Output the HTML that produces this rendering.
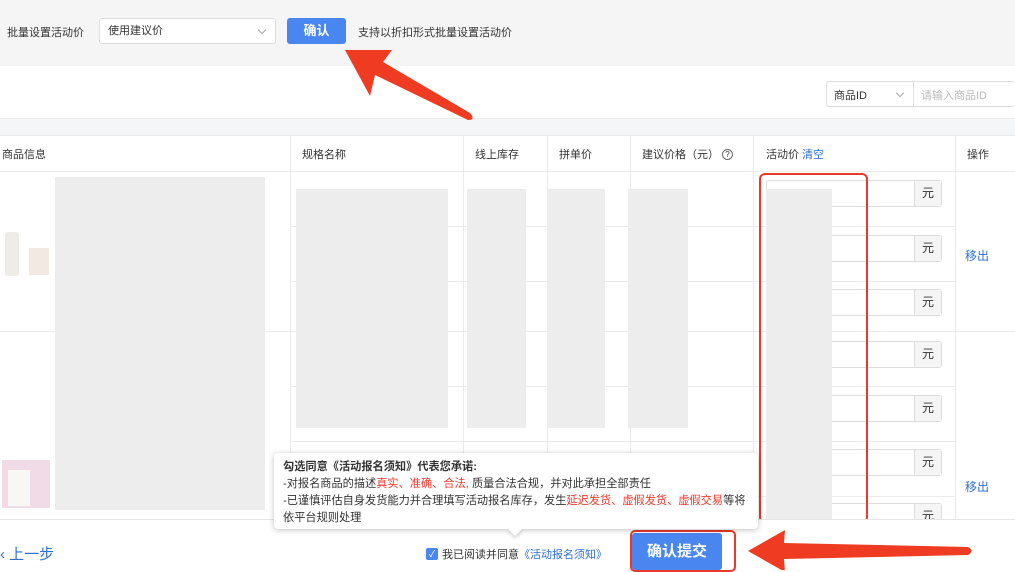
<!DOCTYPE html>
<html><head><meta charset="utf-8"><style>
*{margin:0;padding:0;box-sizing:border-box}
body{width:1015px;height:570px;overflow:hidden;position:relative;background:#fff;font-family:"Liberation Sans","Noto Sans CJK SC",sans-serif;font-size:11px;color:#333}
.a{position:absolute}
.g{position:absolute;background:#ededed}
.hl{position:absolute;height:1px;background:#ebebeb}
.vl{position:absolute;width:1px;background:#ebebeb}
.inp{position:absolute;left:766px;width:176px;height:27px;border:1px solid #ddd;border-radius:3px;background:#fff}
.inp span{position:absolute;right:0;top:0;width:27px;height:25px;background:#f5f5f5;border-left:1px solid #ddd;text-align:center;line-height:25px;font-size:12px}
.red{color:#f03a2e}
.chev{position:absolute;width:6px;height:6px;border-right:1px solid #aaa;border-bottom:1px solid #aaa;transform:rotate(45deg)}
</style></head><body>
<div class="a" style="left:0;top:0;width:1015px;height:66px;background:#f5f5f5"></div>
<div class="a" style="left:7px;top:24px">批量设置活动价</div>
<div class="a" style="left:99px;top:18px;width:177px;height:26px;background:#fff;border:1px solid #ddd;border-radius:3px;padding-left:8px;line-height:24px">使用建议价</div>
<div class="chev" style="left:259px;top:27px"></div>
<div class="a" style="left:287px;top:18px;width:59px;height:26px;background:#4a86f0;border-radius:3px;color:#fff;font-weight:bold;text-align:center;line-height:26px;font-size:13px">确认</div>
<div class="a" style="left:358px;top:24px">支持以折扣形式批量设置活动价</div>

<div class="a" style="left:826px;top:81px;width:189px;height:26px;border:1px solid #ddd;border-radius:3px;border-right:none"></div>
<div class="a" style="left:913px;top:82px;width:1px;height:24px;background:#ddd"></div>
<div class="a" style="left:834px;top:87px">商品ID</div>
<div class="chev" style="left:897px;top:90px"></div>
<div class="a" style="left:921px;top:87px;color:#bbb">请输入商品ID</div>

<div class="a" style="left:0;top:118px;width:1015px;height:18px;background:#f5f6f7;border-top:1px solid #ebebeb"></div>
<div class="hl" style="left:0;top:135px;width:1015px"></div>
<div class="hl" style="left:0;top:171px;width:1015px"></div>
<div class="a" style="left:2px;top:146px">商品信息</div>
<div class="a" style="left:302px;top:146px">规格名称</div>
<div class="a" style="left:475px;top:146px">线上库存</div>
<div class="a" style="left:559px;top:146px">拼单价</div>
<div class="a" style="left:642px;top:146px">建议价格（元）<span style="display:inline-block;width:11px;height:11px;border:1px solid #666;border-radius:50%;font-size:8px;line-height:9px;text-align:center;vertical-align:1px;margin-left:3px">?</span></div>
<div class="a" style="left:766px;top:146px">活动价 <span style="color:#2f6fd0">清空</span></div>
<div class="a" style="left:967px;top:146px">操作</div>
<div class="vl" style="left:290px;top:135px;height:385px"></div>
<div class="vl" style="left:463px;top:135px;height:385px"></div>
<div class="vl" style="left:547px;top:135px;height:385px"></div>
<div class="vl" style="left:630px;top:135px;height:385px"></div>
<div class="vl" style="left:753px;top:135px;height:385px"></div>
<div class="vl" style="left:955px;top:135px;height:385px"></div>
<div class="hl" style="left:290px;top:226px;width:665px"></div>
<div class="hl" style="left:290px;top:281px;width:665px"></div>
<div class="hl" style="left:0;top:331px;width:1015px"></div>
<div class="hl" style="left:290px;top:386px;width:665px"></div>
<div class="hl" style="left:290px;top:441px;width:665px"></div>
<div class="hl" style="left:290px;top:496px;width:665px"></div>

<div class="a" style="left:5px;top:232px;width:14px;height:44px;background:#eeece8;border-radius:3px"></div>
<div class="a" style="left:29px;top:248px;width:20px;height:27px;background:#f1e9e2"></div>
<div class="a" style="left:2px;top:460px;width:48px;height:48px;background:#f0dbe6"></div>
<div class="a" style="left:8px;top:470px;width:22px;height:36px;background:#f7f7f5"></div>

<div class="g" style="left:55px;top:177px;width:210px;height:333px"></div>
<div class="g" style="left:296px;top:189px;width:152px;height:239px"></div>
<div class="g" style="left:467px;top:189px;width:59px;height:239px"></div>
<div class="g" style="left:547px;top:189px;width:58px;height:239px"></div>
<div class="g" style="left:628px;top:189px;width:60px;height:239px"></div>

<div class="inp" style="top:180px"><span>元</span></div>
<div class="inp" style="top:235px"><span>元</span></div>
<div class="inp" style="top:289px"><span>元</span></div>
<div class="inp" style="top:341px"><span>元</span></div>
<div class="inp" style="top:395px"><span>元</span></div>
<div class="inp" style="top:449px"><span>元</span></div>
<div class="inp" style="top:503px"><span>元</span></div>
<div class="g" style="left:766px;top:189px;width:66px;height:330px"></div>
<div class="a" style="left:965px;top:247px;color:#2f6fd0;font-size:12px">移出</div>
<div class="a" style="left:965px;top:478px;color:#2f6fd0;font-size:12px">移出</div>
<div class="a" style="left:759px;top:173px;width:109px;height:350px;border:2px solid #e8392a;border-radius:6px"></div>

<div class="a" style="left:0;top:519px;width:1015px;height:51px;background:#fff;border-top:1px solid #e5e5e5"></div>
<div class="a" style="left:0;top:543px;color:#2f6fd0;font-size:15px">‹ 上一步</div>
<div class="a" style="left:426px;top:548px;width:12px;height:12px;background:#4a86f0;border-radius:2px;color:#fff;font-size:9px;line-height:12px;text-align:center">✓</div>
<div class="a" style="left:442px;top:546px">我已阅读并同意<span style="color:#2f6fd0">《活动报名须知》</span></div>
<div class="a" style="left:632px;top:533px;width:90px;height:37px;background:#4a86f0;border-radius:3px;color:#fff;font-weight:bold;font-size:15px;text-align:center;line-height:37px">确认提交</div>
<div class="a" style="left:630px;top:530px;width:106px;height:42px;border:2px solid #e8392a;border-radius:5px"></div>

<div class="a" style="left:274px;top:453px;width:484px;height:76px;background:#fff;border-radius:4px;box-shadow:0 1px 6px rgba(0,0,0,.25);padding:6px 0 0 9px;line-height:17px;font-size:11.2px;white-space:nowrap">
<b>勾选同意《活动报名须知》代表您承诺:</b><br>-对报名商品的描述<span class="red">真实、准确、合法,</span> 质量合法合规，并对此承担全部责任<br>-已谨慎评估自身发货能力并合理填写活动报名库存，发生<span class="red">延迟发货、虚假发货、虚假交易</span>等将<br>依平台规则处理</div>
<div class="a" style="left:510px;top:524px;width:10px;height:10px;background:#fff;transform:rotate(45deg);box-shadow:2px 2px 3px rgba(0,0,0,.15)"></div>

<svg class="a" style="left:0;top:0" width="1015" height="570">
<path d="M345 50 L392 50 L383 62 L470 113 Q476 120 468 120 L375 75 L370 96 Z" fill="#ee3b22"/>
<path d="M748 551 L785 530 L784 543 L968 547 Q975 551 968 555 L784 559 L785 572 Z" fill="#ee3b22"/>
</svg>
</body></html>
